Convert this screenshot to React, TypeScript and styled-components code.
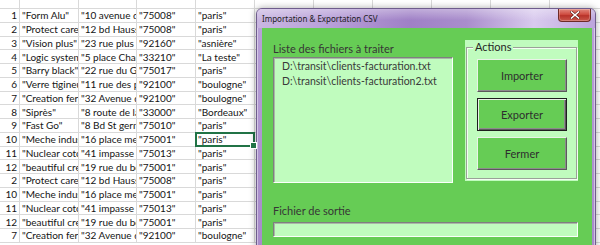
import React from 'react';
import styled, { createGlobalStyle, css } from 'styled-components';

const GlobalStyle = createGlobalStyle`
  html, body {
    margin: 0;
    padding: 0;
    background: #fff;
    overflow: hidden;
  }
`;

const Screen = styled.div`
  position: relative;
  width: 600px;
  height: 245px;
  overflow: hidden;
  background: #fff;
`;

/* ---------- spreadsheet behind the dialog ---------- */

const Sheet = styled.div`
  display: flex;
  flex-direction: column;
  font-family: Lato, 'Liberation Sans', sans-serif;
  font-size: 10px;
  color: #141414;
`;

const Row = styled.div<{ $h: number }>`
  display: grid;
  grid-template-columns: 20px 59px 58px 59px 59px 59px 59px 59px 59px 59px 59px;
  height: ${(p) => p.$h}px;
`;

const Cell = styled.div<{ $num?: boolean; $selected?: boolean }>`
  position: relative;
  box-sizing: border-box;
  border-right: 1px solid #d9d9d9;
  border-bottom: 1px solid #d9d9d9;
  padding: 0 2px;
  display: flex;
  align-items: center;
  justify-content: ${(p) => (p.$num ? 'flex-end' : 'flex-start')};
  white-space: nowrap;
  overflow: ${(p) => (p.$selected ? 'visible' : 'hidden')};

  ${(p) =>
    p.$selected &&
    css`
      &::after {
        content: '';
        position: absolute;
        left: -1px;
        top: -1px;
        right: -1px;
        bottom: -1px;
        border: 2px solid #217346;
      }
      &::before {
        content: '';
        position: absolute;
        right: -3px;
        bottom: -3px;
        width: 5px;
        height: 5px;
        background: #217346;
        border: 1px solid #fff;
        z-index: 1;
      }
    `}
`;

/* ---------- dialog window ---------- */

const Window = styled.div`
  position: absolute;
  left: 256px;
  top: 8px;
  width: 340px;
  height: 250px;
  box-sizing: border-box;
  border: 1px solid #6e5c8c;
  border-radius: 6px 6px 0 0;
  background: linear-gradient(180deg, #b9a2d8 0%, #a68ac9 100%);
  box-shadow: 0 0 7px rgba(0, 0, 0, 0.35), inset 0 0 0 1px rgba(255, 255, 255, 0.45);
  display: flex;
  flex-direction: column;
`;

const TitleBar = styled.div`
  height: 19px;
  flex: none;
  display: flex;
  justify-content: space-between;
  align-items: flex-start;
  padding: 0 4px 0 5px;
  border-radius: 5px 5px 0 0;
  background:
    linear-gradient(180deg, rgba(255, 255, 255, 0.35) 0%, rgba(255, 255, 255, 0) 60%),
    linear-gradient(90deg, #c9b6e1 0%, #b9a1d9 20%, #9f80c6 45%, #a98dcc 62%, #d9caee 82%, #bca5dc 100%);
`;

const Title = styled.span`
  font-family: 'Noto Sans', 'Open Sans', sans-serif;
  font-size: 8px;
  line-height: 19px;
  color: #1c1c1c;
`;

const CloseButton = styled.div`
  width: 33px;
  height: 13px;
  margin-top: 0;
  box-sizing: border-box;
  border: 1px solid #6e2a26;
  border-top: none;
  border-radius: 0 0 4px 4px;
  background: linear-gradient(180deg, #e2887e 0%, #cf4d41 45%, #b8332a 55%, #c9574b 100%);
  box-shadow: inset 0 0 0 1px rgba(255, 255, 255, 0.25);
  display: flex;
  align-items: center;
  justify-content: center;
`;

const Client = styled.div`
  flex: 1;
  margin: 0 3px 0 5px;
  background: #66cc55;
  padding: 12px 0 0 11px;
  display: grid;
  grid-template-columns: 180px 113px;
  column-gap: 12px;
  align-content: start;
  font-family: Lato, 'Open Sans', sans-serif;
  color: #363636;
`;

const FileColumn = styled.div`
  display: flex;
  flex-direction: column;
`;

const Label = styled.div<{ $gap?: number }>`
  font-size: 11px;
  line-height: ${(p) => (p.$gap ? 14 : 17)}px;
  margin-top: ${(p) => p.$gap ?? 0}px;
  margin-bottom: ${(p) => (p.$gap ? 4 : 0)}px;
`;

const sunken = css`
  box-sizing: border-box;
  background: #c0fcbe;
  border: 1px solid;
  border-color: #7f7f7f #fbfffb #fbfffb #7f7f7f;
  box-shadow: inset 1px 1px 0 #a8b8a6;
`;

const ListBox = styled.div`
  ${sunken};
  height: 126px;
  padding: 1px 0 0 8px;
  font-size: 10.5px;
  line-height: 14.5px;
  color: #3a3a3a;
`;

const ActionsPanel = styled.div`
  height: 141px;
  box-sizing: border-box;
  background: #c0fcbe;
  padding: 0 1px 2px 1px;
`;

const GroupBox = styled.fieldset`
  margin: 0;
  height: 100%;
  box-sizing: border-box;
  padding: 0 0 0 10px;
  border: 1px solid #9aa298;
  box-shadow: inset 1px 1px 0 #f4fff3, 1px 1px 0 #f4fff3;
  min-width: 0;
`;

const Legend = styled.legend`
  font-size: 11px;
  line-height: 14px;
  padding: 0 2px;
  margin-left: -4px;
  color: #262626;
  background: #c0fcbe;
`;

const ButtonStack = styled.div`
  display: flex;
  flex-direction: column;
  gap: 6px;
  padding-top: 5px;
`;

const ActionButton = styled.div<{ $default?: boolean }>`
  width: 90px;
  height: 33px;
  box-sizing: border-box;
  background: #66cc55;
  display: flex;
  align-items: center;
  justify-content: center;
  font-size: 11px;
  color: #2e2e2e;
  border: 1px solid;
  border-color: #e9f2e8 #5a5a5a #5a5a5a #e9f2e8;
  box-shadow: inset -1px -1px 0 #8c8c8c;

  ${(p) =>
    p.$default &&
    css`
      border: 1px solid #1e1e1e;
      box-shadow: inset 1px 1px 0 #e9f2e8, inset -1px -1px 0 #5a5a5a, inset -2px -2px 0 #8c8c8c;
    `}
`;

const OutputSection = styled.div`
  grid-column: 1 / -1;
  display: flex;
  flex-direction: column;
`;

const TextBox = styled.div`
  ${sunken};
  height: 15px;
`;

type Line = [string, string, string, string, string];

const lines: Line[] = [
  ['1', '"Form Alu"', '"10 avenue du Général"', '"75008"', '"paris"'],
  ['2', '"Protect care"', '"12 bd Haussmann"', '"75008"', '"paris"'],
  ['3', '"Vision plus"', '"23 rue plus loin"', '"92160"', '"asnière"'],
  ['4', '"Logic system"', '"5 place Charles"', '"33210"', '"La teste"'],
  ['5', '"Barry black"', '"22 rue du Grand"', '"75017"', '"paris"'],
  ['6', '"Verre tigineux"', '"11 rue des prés"', '"92100"', '"boulogne"'],
  ['7', '"Creation fer"', '"32 Avenue de la"', '"92100"', '"boulogne"'],
  ['8', '"Siprès"', '"8 route de la mer"', '"33000"', '"Bordeaux"'],
  ['9', '"Fast Go"', '"8 Bd St germain"', '"75010"', '"paris"'],
  ['10', '"Meche industrie"', '"16 place merle"', '"75001"', '"paris"'],
  ['11', '"Nuclear coton"', '"41 impasse paris"', '"75013"', '"paris"'],
  ['12', '"beautiful creation"', '"19 rue du bois"', '"75001"', '"paris"'],
  ['2', '"Protect care"', '"12 bd Haussmann"', '"75008"', '"paris"'],
  ['10', '"Meche industrie"', '"16 place merle"', '"75001"', '"paris"'],
  ['11', '"Nuclear coton"', '"41 impasse paris"', '"75013"', '"paris"'],
  ['12', '"beautiful creation"', '"19 rue du bois"', '"75001"', '"paris"'],
  ['7', '"Creation fer"', '"32 Avenue de la"', '"92100"', '"boulogne"'],
];

const EMPTY_COLS = 6;

const files = ['D:\\transit\\clients-facturation.txt', 'D:\\transit\\clients-facturation2.txt'];

const App = () => {
  return (
    <>
      <GlobalStyle />
      <Screen>
        <Sheet>
          <Row $h={9}>
            {Array.from({ length: 5 + EMPTY_COLS }).map((_, i) => (
              <Cell key={i} />
            ))}
          </Row>
          {lines.map((line, r) => (
            <Row key={r} $h={13.75}>
              <Cell $num>{line[0]}</Cell>
              <Cell>{line[1]}</Cell>
              <Cell>{line[2]}</Cell>
              <Cell>{line[3]}</Cell>
              <Cell $selected={r === 9}>{line[4]}</Cell>
              {Array.from({ length: EMPTY_COLS }).map((_, i) => (
                <Cell key={i} />
              ))}
            </Row>
          ))}
        </Sheet>

        <Window>
          <TitleBar>
            <Title>Importation &amp; Exportation CSV</Title>
            <CloseButton>
              <svg width="10" height="8" viewBox="0 0 10 8">
                <path d="M1.5 1 L8.5 7 M8.5 1 L1.5 7" stroke="#5a1a16" strokeWidth="2.6" strokeLinecap="square" />
                <path d="M1.5 1 L8.5 7 M8.5 1 L1.5 7" stroke="#fff" strokeWidth="1.6" strokeLinecap="square" />
              </svg>
            </CloseButton>
          </TitleBar>

          <Client>
            <FileColumn>
              <Label>Liste des fichiers à traiter</Label>
              <ListBox>
                {files.map((f) => (
                  <div key={f}>{f}</div>
                ))}
              </ListBox>
            </FileColumn>

            <ActionsPanel>
              <GroupBox>
                <Legend>Actions</Legend>
                <ButtonStack>
                  <ActionButton>Importer</ActionButton>
                  <ActionButton $default>Exporter</ActionButton>
                  <ActionButton>Fermer</ActionButton>
                </ButtonStack>
              </GroupBox>
            </ActionsPanel>

            <OutputSection>
              <Label $gap={21}>Fichier de sortie</Label>
              <TextBox />
            </OutputSection>
          </Client>
        </Window>
      </Screen>
    </>
  );
};

export default App;
